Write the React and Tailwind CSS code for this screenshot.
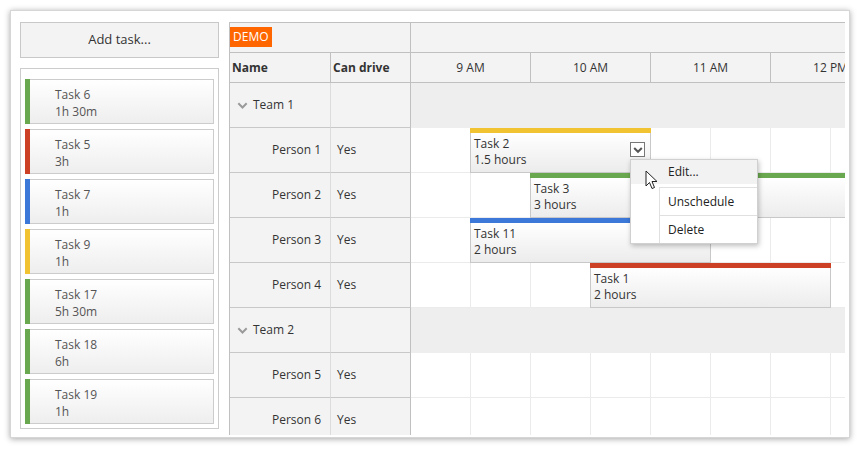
import React from 'react';

const font = { fontFamily: '"Open Sans", "Noto Sans", sans-serif' };

const tasks = [
    { name: 'Task 6', dur: '1h 30m', bar: 'bg-[#6aa84f]' },
    { name: 'Task 5', dur: '3h', bar: 'bg-[#cc4125]' },
    { name: 'Task 7', dur: '1h', bar: 'bg-[#3c78d8]' },
    { name: 'Task 9', dur: '1h', bar: 'bg-[#f1c232]' },
    { name: 'Task 17', dur: '5h 30m', bar: 'bg-[#6aa84f]' },
    { name: 'Task 18', dur: '6h', bar: 'bg-[#6aa84f]' },
    { name: 'Task 19', dur: '1h', bar: 'bg-[#6aa84f]' },
];

const rows = [
    { type: 'team', name: 'Team 1' },
    { type: 'person', name: 'Person 1', drive: 'Yes', events: [{ name: 'Task 2', dur: '1.5 hours', left: 59, width: 181, bar: 'bg-[#f1c232]', menu: true }] },
    { type: 'person', name: 'Person 2', drive: 'Yes', events: [{ name: 'Task 3', dur: '3 hours', left: 119, width: 400, bar: 'bg-[#6aa84f]' }] },
    { type: 'person', name: 'Person 3', drive: 'Yes', events: [{ name: 'Task 11', dur: '2 hours', left: 59, width: 241, bar: 'bg-[#3c78d8]' }] },
    { type: 'person', name: 'Person 4', drive: 'Yes', events: [{ name: 'Task 1', dur: '2 hours', left: 179, width: 241, bar: 'bg-[#cc4125]' }] },
    { type: 'team', name: 'Team 2' },
    { type: 'person', name: 'Person 5', drive: 'Yes', events: [] },
    { type: 'person', name: 'Person 6', drive: 'Yes', events: [] },
];

const cells = [0, 1, 2, 3, 4, 5, 6, 7];

const Chevron = ({ className, width = 1.6 }) => (
    <svg viewBox="0 0 10 10" className={className}>
        <path d="M1.2 3 L5 6.8 L8.8 3" fill="none" stroke="currentColor" strokeWidth={width} />
    </svg>
);

const App = () => {
    return (
        <div className="relative w-[860px] h-[450px] bg-white overflow-hidden text-[#333]" style={font}>
            {/* Frame */}
            <div className="absolute left-[10px] top-[10px] w-[840px] h-[428px] bg-white border border-[#d6d6d6] shadow-[0_1px_6px_rgba(0,0,0,0.35)] overflow-hidden">
                <div className="flex gap-[10px] pl-[9px] pt-[11px]">
                    {/* Left side */}
                    <div className="flex flex-col w-[199px] shrink-0">
                        <div className="h-[36px] border border-[#c8c8c8] bg-[#f3f3f3] flex items-center justify-center text-[13px] text-[#333]">
                            Add task...
                        </div>
                        <div className="mt-[10px] h-[361px] border border-[#ccc] px-[4px] pt-[10px] flex flex-col gap-[5px]">
                            {tasks.map((t) => (
                                <div key={t.name} className="flex h-[45px]">
                                    <div className={`w-[5px] ${t.bar}`} />
                                    <div className="flex-1 border border-l-0 border-[#ccc] bg-gradient-to-b from-white to-[#eeeeee] pl-[25px] pt-[6px] text-[12px] leading-[17px] text-[#555]">
                                        <div>{t.name}</div>
                                        <div>{t.dur}</div>
                                    </div>
                                </div>
                            ))}
                        </div>
                    </div>

                    {/* Scheduler */}
                    <div className="w-[616px] h-[413px] border-t border-l border-[#c0c0c0] flex flex-col overflow-hidden shrink-0">
                        <div className="flex h-[30px] shrink-0 border-b border-[#c0c0c0] bg-[#f3f3f3]">
                            <div className="w-[181px] shrink-0 border-r border-[#c0c0c0]">
                                <span className="inline-block bg-[#ff6600] text-white text-[12px] leading-[20px] px-[3px]">DEMO</span>
                            </div>
                            <div className="flex-1" />
                        </div>
                        <div className="flex h-[30px] shrink-0 border-b border-[#c0c0c0] bg-[#f3f3f3] text-[12px]">
                            <div className="w-[101px] shrink-0 border-r border-[#c0c0c0] flex items-center pl-[2px] font-bold">Name</div>
                            <div className="w-[80px] shrink-0 border-r border-[#c0c0c0] flex items-center pl-[2px] font-bold">Can drive</div>
                            {['9 AM', '10 AM', '11 AM', '12 PM'].map((h) => (
                                <div key={h} className="w-[120px] shrink-0 border-r border-[#c0c0c0] flex items-center justify-center">{h}</div>
                            ))}
                        </div>
                        {rows.map((r) => (
                            <div key={r.name} className="flex h-[45px] shrink-0 text-[12px]">
                                <div className="w-[101px] shrink-0 border-r border-b border-r-[#dcdcdc] border-b-[#c8c8c8] bg-[#f3f3f3] flex items-center">
                                    {r.type === 'team' ? (
                                        <div className="flex items-center pl-[7px] gap-[5px]">
                                            <Chevron className="w-[11px] h-[11px] text-[#9a9a9a]" width={1.8} />
                                            <span>{r.name}</span>
                                        </div>
                                    ) : (
                                        <span className="pl-[42px]">{r.name}</span>
                                    )}
                                </div>
                                <div className="w-[80px] shrink-0 border-r border-b border-r-[#c0c0c0] border-b-[#c8c8c8] bg-[#f3f3f3] flex items-center pl-[6px]">
                                    {r.drive}
                                </div>
                                {r.type === 'team' ? (
                                    <div className="flex-1 bg-[#eeeeee]" />
                                ) : (
                                    <div className="relative flex-1 flex border-b border-[#ebebeb]">
                                        {cells.map((c) => (
                                            <div key={c} className="w-[60px] shrink-0 border-r border-[#ebebeb]" />
                                        ))}
                                        {r.events.map((e) => (
                                            <div
                                                key={e.name}
                                                className="absolute top-0 h-[45px] flex flex-col"
                                                style={{ left: e.left, width: e.width }}
                                            >
                                                <div className={`h-[5px] ${e.bar}`} />
                                                <div className="relative flex-1 border border-t-0 border-[#c8c8c8] bg-gradient-to-b from-white to-[#ececec] pl-[3px] pt-[3px] leading-[16px] text-[12px] text-[#333]">
                                                    <div>{e.name}</div>
                                                    <div>{e.dur}</div>
                                                    {e.menu && (
                                                        <div className="absolute right-[5px] top-[9px] w-[15px] h-[15px] border border-[#777] bg-white flex items-center justify-center">
                                                            <Chevron className="w-[10px] h-[10px] text-[#555]" width={2} />
                                                        </div>
                                                    )}
                                                </div>
                                            </div>
                                        ))}
                                    </div>
                                )}
                            </div>
                        ))}
                    </div>
                </div>
            </div>

            {/* Context menu */}
            <div className="absolute left-[630px] top-[159px] w-[128px] bg-white border border-[#d0d0d0] shadow-[1px_2px_5px_rgba(0,0,0,0.25)] text-[12px] text-[#222]">
                <div className="h-[24px] bg-[#f2f2f2] flex items-center pl-[37px]">Edit...</div>
                <div className="relative">
                    <div className="absolute left-[28px] top-0 bottom-0 border-l border-[#e0e0e0]" />
                    <div className="ml-[29px] border-t border-[#e0e0e0] mt-[3px]" />
                    <div className="h-[27px] flex items-center pl-[37px]">Unschedule</div>
                    <div className="ml-[29px] border-t border-[#e0e0e0]" />
                    <div className="h-[27px] flex items-center pl-[37px]">Delete</div>
                </div>
            </div>

            {/* Mouse cursor */}
            <svg className="absolute left-[645px] top-[170px]" width="14" height="20" viewBox="0 0 14 20">
                <path d="M1 1 L1 16 L4.5 12.5 L7 18.5 L9.5 17.5 L7 11.5 L12 11.5 Z" fill="white" stroke="#222" strokeWidth="1" strokeLinejoin="round" />
            </svg>
        </div>
    );
};

export default App;
